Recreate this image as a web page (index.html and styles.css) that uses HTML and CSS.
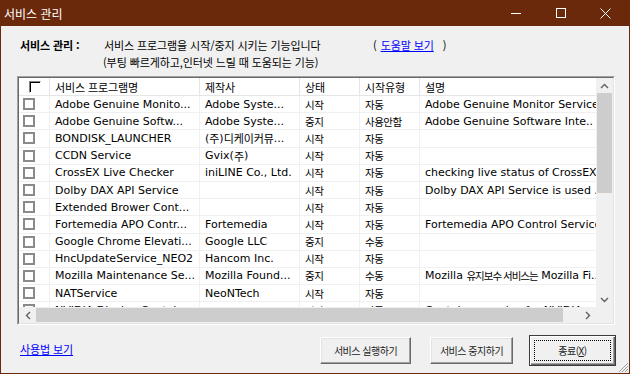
FILE: index.html
```html
<!DOCTYPE html>
<html lang="ko">
<head>
<meta charset="utf-8">
<title>서비스 관리</title>
<link rel="stylesheet" href="styles.css">
</head>
<body>
<div class="win">
  <header class="titlebar">
    <span class="title">서비스 관리</span>
    <div class="caps">
      <span class="cbtn"><svg width="10" height="10" viewBox="0 0 10 10"><line x1="0" y1="5.5" x2="10" y2="5.5" stroke="#fff" stroke-width="1"/></svg></span>
      <span class="cbtn"><svg width="10" height="10" viewBox="0 0 10 10"><rect x="0.5" y="0.5" width="9" height="9" fill="none" stroke="#fff" stroke-width="1"/></svg></span>
      <span class="cbtn"><svg width="11" height="11" viewBox="0 0 11 11"><path d="M0.5 0.5L10.5 10.5M10.5 0.5L0.5 10.5" stroke="#fff" stroke-width="1"/></svg></span>
    </div>
  </header>
  <main class="client">
    <div class="intro">
      <b class="lbl ko">서비스 관리 :</b>
      <span class="ko">서비스 프로그램을 시작/중지 시키는 기능입니다</span>
      <span class="help ko">(<a class="link">도움말 보기</a>)</span>
      <span class="line2 ko">(부팅 빠르게하고,인터넷 느릴 때 도움되는 기능)</span>
    </div>

    <div class="list">
      <div class="list-in">
        <div class="viewport">
          <div class="hdr">
            <div class="c c0"><span class="hchk"></span></div>
            <div class="c c1 ko">서비스 프로그램명</div>
            <div class="c c2 ko">제작사</div>
            <div class="c c3 ko">상태</div>
            <div class="c c4 ko">시작유형</div>
            <div class="c c5 ko">설명</div>
          </div>
          <div class="row"><div class="c c0"><span class="chk"></span></div><div class="c c1">Adobe Genuine Monito...</div><div class="c c2">Adobe Syste...</div><div class="c c3 kl">시작</div><div class="c c4 kl">자동</div><div class="c c5">Adobe Genuine Monitor Service</div></div>
          <div class="row"><div class="c c0"><span class="chk"></span></div><div class="c c1">Adobe Genuine Softw...</div><div class="c c2">Adobe Syste...</div><div class="c c3 kl">중지</div><div class="c c4 kl">사용안함</div><div class="c c5">Adobe Genuine Software Inte..</div></div>
          <div class="row"><div class="c c0"><span class="chk"></span></div><div class="c c1">BONDISK_LAUNCHER</div><div class="c c2">(<span class="ko">주</span>)<span class="ko">디케이커뮤</span>...</div><div class="c c3 kl">시작</div><div class="c c4 kl">자동</div><div class="c c5"></div></div>
          <div class="row"><div class="c c0"><span class="chk"></span></div><div class="c c1">CCDN Service</div><div class="c c2">Gvix(<span class="ko">주</span>)</div><div class="c c3 kl">시작</div><div class="c c4 kl">자동</div><div class="c c5"></div></div>
          <div class="row"><div class="c c0"><span class="chk"></span></div><div class="c c1">CrossEX Live Checker</div><div class="c c2">iniLINE Co., Ltd.</div><div class="c c3 kl">시작</div><div class="c c4 kl">자동</div><div class="c c5">checking live status of CrossEX.</div></div>
          <div class="row"><div class="c c0"><span class="chk"></span></div><div class="c c1">Dolby DAX API Service</div><div class="c c2"></div><div class="c c3 kl">시작</div><div class="c c4 kl">자동</div><div class="c c5">Dolby DAX API Service is used .</div></div>
          <div class="row"><div class="c c0"><span class="chk"></span></div><div class="c c1">Extended Brower Cont...</div><div class="c c2"></div><div class="c c3 kl">시작</div><div class="c c4 kl">자동</div><div class="c c5"></div></div>
          <div class="row"><div class="c c0"><span class="chk"></span></div><div class="c c1">Fortemedia APO Contr...</div><div class="c c2">Fortemedia</div><div class="c c3 kl">시작</div><div class="c c4 kl">자동</div><div class="c c5">Fortemedia APO Control Service</div></div>
          <div class="row"><div class="c c0"><span class="chk"></span></div><div class="c c1">Google Chrome Elevati...</div><div class="c c2">Google LLC</div><div class="c c3 kl">중지</div><div class="c c4 kl">수동</div><div class="c c5"></div></div>
          <div class="row"><div class="c c0"><span class="chk"></span></div><div class="c c1">HncUpdateService_NEO2</div><div class="c c2">Hancom Inc.</div><div class="c c3 kl">시작</div><div class="c c4 kl">자동</div><div class="c c5"></div></div>
          <div class="row"><div class="c c0"><span class="chk"></span></div><div class="c c1">Mozilla Maintenance Se...</div><div class="c c2">Mozilla Found...</div><div class="c c3 kl">중지</div><div class="c c4 kl">수동</div><div class="c c5">Mozilla&nbsp;<span class="ks">유지보수 서비스는</span>&nbsp;Mozilla Fi..</div></div>
          <div class="row"><div class="c c0"><span class="chk"></span></div><div class="c c1">NATService</div><div class="c c2">NeoNTech</div><div class="c c3 kl">시작</div><div class="c c4 kl">자동</div><div class="c c5"></div></div>
          <div class="row"><div class="c c0"><span class="chk"></span></div><div class="c c1">NVIDIA Display Contain...</div><div class="c c2"></div><div class="c c3 kl">시작</div><div class="c c4 kl">자동</div><div class="c c5">Container service for NVIDIA ...</div></div>
        </div>
        <div class="vs">
          <div class="arr"><svg width="9" height="6" viewBox="0 0 9 6"><path d="M1 5L4.5 1.5L8 5" fill="none" stroke="#606060" stroke-width="1.4"/></svg></div>
          <div class="vthumb"></div>
          <div class="spacer"></div>
          <div class="arr"><svg width="9" height="6" viewBox="0 0 9 6"><path d="M1 1L4.5 4.5L8 1" fill="none" stroke="#606060" stroke-width="1.4"/></svg></div>
        </div>
        <div class="hs">
          <div class="harr"><svg width="6" height="9" viewBox="0 0 6 9"><path d="M5 1L1.5 4.5L5 8" fill="none" stroke="#606060" stroke-width="1.4"/></svg></div>
          <div class="hthumb"></div>
          <div class="spacer"></div>
          <div class="harr"><svg width="6" height="9" viewBox="0 0 6 9"><path d="M1 1L4.5 4.5L1 8" fill="none" stroke="#606060" stroke-width="1.4"/></svg></div>
        </div>
        <div class="corner"></div>
      </div>
    </div>

    <div class="footer">
      <a class="link ko">사용법 보기</a>
      <button class="btn b1 kb">서비스 실행하기</button>
      <button class="btn b2 kb">서비스 중지하기</button>
      <button class="btn b3 kb"><span class="focus">종료(<u>X</u>)</span></button>
    </div>
    <svg class="grip" width="12" height="12" viewBox="0 0 12 12"><path d="M11 2L2 11M11 5L5 11M11 8L8 11" stroke="#a0a0a0" stroke-width="1"/></svg>
  </main>
</div>
</body>
</html>
```
FILE: styles.css
```css
* { box-sizing: border-box; }
html, body { margin: 0; padding: 0; }
body {
  width: 630px;
  height: 374px;
  overflow: hidden;
  background: #f0f0f0;
  font-family: "DejaVu Sans", "Noto Sans CJK KR", sans-serif;
  font-size: 11px;
  color: #000;
}
.ko, .kl, .ks, .kb {
  font-family: "Noto Sans CJK KR", sans-serif;
}
.ko {
  font-size: 11px;
  letter-spacing: -0.1px;
}
.kl {
  font-size: 10.5px;
  letter-spacing: -0.5px;
}
.ks {
  font-size: 10.5px;
  letter-spacing: -1px;
}
.kb {
  font-size: 10px;
  letter-spacing: -0.5px;
}
.win {
  width: 630px;
  height: 374px;
  display: flex;
  flex-direction: column;
}
.titlebar {
  height: 26px;
  flex: none;
  background: #6b290c;
  color: #fff;
  display: flex;
  align-items: center;
}
.title {
  flex: 1;
  padding-left: 4px;
  font-family: "Noto Sans CJK KR", sans-serif;
  font-size: 12px;
}
.caps {
  display: flex;
  align-self: stretch;
  padding-right: 2px;
}
.cbtn {
  width: 45px;
  display: flex;
  align-items: center;
  justify-content: center;
}
.client {
  position: relative;
  flex: 1;
  border: 1px solid #6b290c;
  border-top: 0;
  padding-top: 11px;
}
.intro {
  display: grid;
  grid-template-columns: 84px 269px auto;
  line-height: 17px;
  margin-left: 19px;
}
.lbl { font-weight: bold; }
.help { white-space: pre; }
.help .link { margin: 0 9px 0 4px; }
.line2 {
  grid-column: 2 / span 2;
  margin-left: -1px;
}
.link {
  color: #0000ff;
  text-decoration: underline;
  cursor: pointer;
}
.list {
  margin: 5px 0 0 16px;
  width: 598px;
  height: 249px;
  border: 1px solid;
  border-color: #a0a0a0 #ffffff #ffffff #a0a0a0;
}
.list-in {
  width: 100%;
  height: 100%;
  border: 1px solid;
  border-color: #696969 #e3e3e3 #e3e3e3 #696969;
  display: grid;
  grid-template-columns: 1fr 17px;
  grid-template-rows: 1fr 16px;
  background: #fff;
}
.viewport {
  overflow: hidden;
  background: #fff;
}
.hdr, .row {
  display: flex;
  width: max-content;
}
.hdr {
  height: 18px;
  border-bottom: 1px solid #e5e5e5;
}
.row {
  height: 17.2px;
  border-bottom: 1px solid #f0f0f0;
}
.c {
  flex: none;
  display: flex;
  align-items: center;
  padding-left: 5px;
  white-space: nowrap;
  overflow: hidden;
  border-right: 1px solid #f0f0f0;
}
.hdr .c { border-right-color: #e5e5e5; }
.c0 { width: 31px; padding-left: 4px; }
.hdr .c0 { padding-left: 10px; }
.c1 { width: 150px; }
.c2 { width: 100px; }
.c3 { width: 60px; }
.c4 { width: 60px; }
.c5 { width: 320px; border-right: 0; }
.chk {
  width: 12px;
  height: 12px;
  border: 2px solid #8a8a8a;
  background: #fff;
}
.hchk {
  width: 12px;
  height: 12px;
  border: 1px solid;
  border-color: #808080 #ffffff #ffffff #808080;
  box-shadow: inset 1px 1px #000;
  background: #fff;
}
.vs {
  background: #f0f0f0;
  display: flex;
  flex-direction: column;
}
.arr {
  height: 15px;
  display: flex;
  align-items: center;
  justify-content: center;
}
.vthumb {
  height: 100px;
  margin: 0 1px;
  background: #cdcdcd;
}
.spacer { flex: 1; }
.hs {
  background: #f0f0f0;
  display: flex;
}
.harr {
  width: 17px;
  display: flex;
  align-items: center;
  justify-content: center;
}
.hthumb {
  width: 527px;
  margin: 1px 0;
  background: #cdcdcd;
}
.corner { background: #f0f0f0; }
.footer {
  display: flex;
  align-items: center;
  margin-top: 11px;
  padding: 0 13px 0 19px;
  height: 29px;
}
.footer > .link { margin-top: -3px; }
.btn {
  height: 27px;
  background: #f0f0f0;
  color: #222;
  border: 1px solid;
  border-color: #ffffff #696969 #696969 #ffffff;
  box-shadow: inset -1px -1px #a0a0a0, inset 1px 1px #e3e3e3;
  padding: 0;
  display: flex;
  align-items: center;
  justify-content: center;
}
.b1 { width: 91px; margin-left: auto; }
.b2 { width: 83px; margin-left: 19px; }
.b3 {
  width: 87px;
  height: 31px;
  margin-left: 16px;
  border: 1px solid #3c3c3c;
  box-shadow: inset 1px 1px #fff, inset -1px -1px #696969, inset -2px -2px #a0a0a0;
  padding: 4px;
}
.focus {
  width: 100%;
  height: 100%;
  border: 1px dotted #000;
  display: flex;
  align-items: center;
  justify-content: center;
}
.grip {
  position: absolute;
  right: 0;
  bottom: 0;
}
```
